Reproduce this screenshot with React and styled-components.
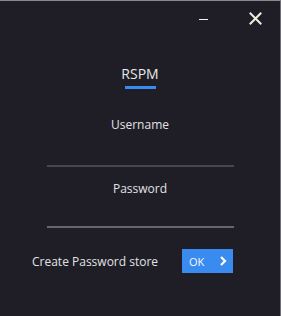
import React from 'react';
import styled, { createGlobalStyle } from 'styled-components';

const Global = createGlobalStyle`
    html, body {
        margin: 0;
        padding: 0;
        background: #1f1e27;
    }
    body {
        font-family: "Open Sans", "Noto Sans", sans-serif;
        color: #e4e4e6;
    }
`;

const Window = styled.div`
    width: 281px;
    height: 316px;
    box-sizing: border-box;
    background: #1f1e27;
    border-top: 1px solid #8a8a8e;
    border-right: 1px solid #6e6e74;
    display: flex;
    flex-direction: column;
`;

const TitleBar = styled.div`
    height: 34px;
    display: flex;
    justify-content: flex-end;
    align-items: center;
    padding-right: 18px;
    gap: 38px;
`;

const WinButton = styled.div`
    width: 14px;
    height: 14px;
    display: flex;
    align-items: center;
    justify-content: center;
    cursor: pointer;
`;

const MinBar = styled.div`
    width: 9px;
    height: 1px;
    background: #f2f2f2;
    margin-top: 2px;
`;

const Form = styled.div`
    display: flex;
    flex-direction: column;
    align-items: center;
    padding-top: 29px;
`;

const Heading = styled.div`
    font-size: 14px;
    line-height: 20px;
    color: #e8e8ea;
`;

const HeadingLine = styled.div`
    width: 31px;
    height: 3px;
    margin-top: 2px;
    background: #3a8bef;
`;

const Field = styled.div`
    width: 187px;
    display: flex;
    flex-direction: column;
    align-items: center;
    margin-top: ${({ $top }) => $top}px;
`;

const Label = styled.label`
    font-size: 12px;
    line-height: 18px;
    color: #e2e2e4;
`;

const Input = styled.input`
    width: 100%;
    box-sizing: border-box;
    height: ${({ $h }) => $h}px;
    background: transparent;
    border: none;
    border-bottom: 2px solid ${({ $line }) => $line};
    outline: none;
    color: #e4e4e6;
    font-family: inherit;
    font-size: 13px;
    text-align: center;
    padding: 0;
`;

const Footer = styled.div`
    display: flex;
    align-items: center;
    justify-content: space-between;
    margin-top: 21px;
    padding: 0 47px 0 32px;
`;

const FooterText = styled.span`
    font-size: 12px;
    color: #e2e2e4;
`;

const OkButton = styled.button`
    width: 51px;
    height: 24px;
    border: none;
    background: #3a8bef;
    color: #f4f6fa;
    font-family: inherit;
    font-size: 11px;
    display: flex;
    align-items: center;
    justify-content: space-between;
    padding: 0 6px 0 7px;
    cursor: pointer;
`;

export default function App() {
    return (
        <>
            <Global />
            <Window>
                <TitleBar>
                    <WinButton><MinBar /></WinButton>
                    <WinButton>
                        <svg width="13" height="13" viewBox="0 0 13 13">
                            <path d="M1.5 1.5 L11.5 11.5 M11.5 1.5 L1.5 11.5" stroke="#f3ede0" strokeWidth="2" strokeLinecap="square" />
                        </svg>
                    </WinButton>
                </TitleBar>
                <Form>
                    <Heading>RSPM</Heading>
                    <HeadingLine />
                    <Field $top={27}>
                        <Label>Username</Label>
                        <Input $h={33} $line="#47474d" />
                    </Field>
                    <Field $top={13}>
                        <Label>Password</Label>
                        <Input type="password" $h={30} $line="#66666c" />
                    </Field>
                </Form>
                <Footer>
                    <FooterText>Create Password store</FooterText>
                    <OkButton>
                        <span>OK</span>
                        <svg width="8" height="10" viewBox="0 0 8 10">
                            <path d="M2 1 L6 5 L2 9" stroke="#ffffff" strokeWidth="2.2" fill="none" />
                        </svg>
                    </OkButton>
                </Footer>
            </Window>
        </>
    );
}
